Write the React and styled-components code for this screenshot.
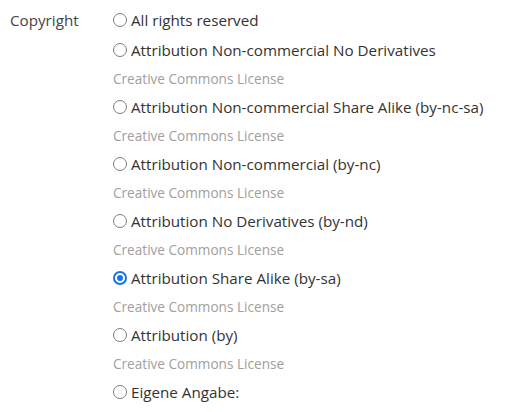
import React, { useState } from 'react';
import styled, { createGlobalStyle } from 'styled-components';

const GlobalStyle = createGlobalStyle`
	body {
		margin: 0;
		background: #fff;
		font-family: "Open Sans", "Liberation Sans", sans-serif;
		color: #333;
	}
`;

const Field = styled.div`
	display: flex;
	padding: 6px 0 0 10px;
`;

const FieldLabel = styled.div`
	width: 103px;
	font-size: 15.2px;
	line-height: 28px;
	color: #444;
`;

const Options = styled.div`
	display: flex;
	flex-direction: column;
`;

const Item = styled.div`
	display: flex;
	flex-direction: column;
	padding-bottom: ${({ plain }) => (plain ? '2px' : '0')};
`;

const OptionLabel = styled.label`
	display: flex;
	align-items: center;
	height: 28px;
	font-size: 15.2px;
	color: #333;
	cursor: pointer;
`;

const Radio = styled.span`
	box-sizing: border-box;
	display: inline-flex;
	align-items: center;
	justify-content: center;
	flex-shrink: 0;
	width: 14px;
	height: 14px;
	margin-right: 4px;
	border-radius: 50%;
	border: ${({ checked }) => (checked ? '2px solid #1a73e8' : '1.5px solid #7c7c86')};
	background: #fff;

	&::after {
		content: '';
		display: ${({ checked }) => (checked ? 'block' : 'none')};
		width: 6px;
		height: 6px;
		border-radius: 50%;
		background: #1a73e8;
	}
`;

const Hint = styled.div`
	height: 29px;
	line-height: 29px;
	font-size: 13.6px;
	color: #a0a0a0;
`;

const options = [
	{ key: 'all', title: 'All rights reserved' },
	{ key: 'by-nc-nd', title: 'Attribution Non-commercial No Derivatives', cc: true },
	{ key: 'by-nc-sa', title: 'Attribution Non-commercial Share Alike (by-nc-sa)', cc: true },
	{ key: 'by-nc', title: 'Attribution Non-commercial (by-nc)', cc: true },
	{ key: 'by-nd', title: 'Attribution No Derivatives (by-nd)', cc: true },
	{ key: 'by-sa', title: 'Attribution Share Alike (by-sa)', cc: true },
	{ key: 'by', title: 'Attribution (by)', cc: true },
	{ key: 'custom', title: 'Eigene Angabe:' },
];

export default function App() {
	const [selected, setSelected] = useState('by-sa');

	return (
		<>
			<GlobalStyle />
			<Field>
				<FieldLabel>Copyright</FieldLabel>
				<Options>
					{options.map(option => (
						<Item key={option.key} plain={!option.cc}>
							<OptionLabel onClick={() => setSelected(option.key)}>
								<Radio checked={selected === option.key} />
								{option.title}
							</OptionLabel>
							{option.cc && <Hint>Creative Commons License</Hint>}
						</Item>
					))}
				</Options>
			</Field>
		</>
	);
}
